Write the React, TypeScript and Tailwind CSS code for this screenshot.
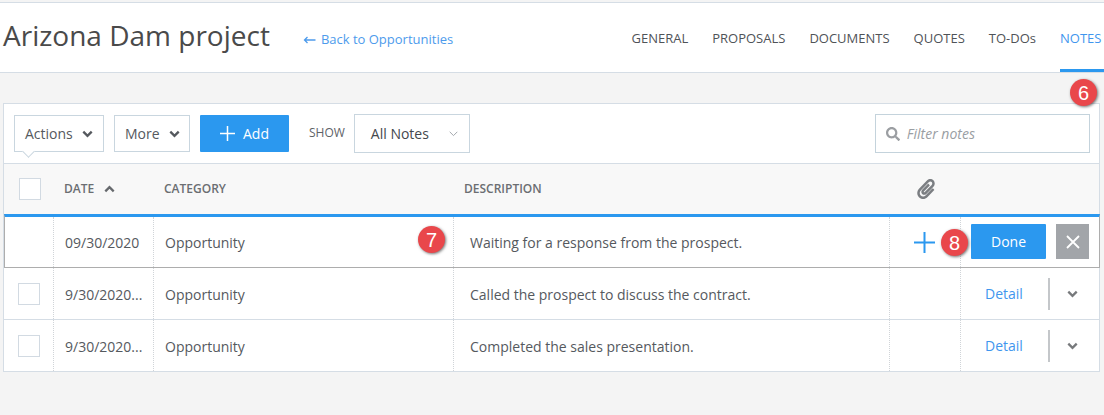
import { FaPaperclip, FaSearch } from "react-icons/fa";
import type { ReactNode } from "react";

const TABS = ["GENERAL", "PROPOSALS", "DOCUMENTS", "QUOTES", "TO-DOs"];

const ROWS = [
  { date: "9/30/2020...", text: "Called the prospect to discuss the contract." },
  { date: "9/30/2020...", text: "Completed the sales presentation." },
];

function Chevron({ up = false, className = "" }: { up?: boolean; className?: string }) {
  return (
    <svg width="11" height="8" viewBox="0 0 11 8" className={className}>
      <path
        d={up ? "M1.3 6.4 5.5 2.2 9.7 6.4" : "M1.3 1.6 5.5 5.8 9.7 1.6"}
        fill="none"
        stroke="currentColor"
        strokeWidth="2.3"
      />
    </svg>
  );
}

function Badge({ n, className }: { n: number; className: string }) {
  return (
    <span
      className={`absolute flex h-[27px] w-[27px] items-center justify-center rounded-full bg-[#e9474b] text-[20px] leading-none text-white shadow-[1px_1px_3px_rgba(0,0,0,0.55)] font-['Liberation_Sans',sans-serif] ${className}`}
    >
      {n}
    </span>
  );
}

function Checkbox() {
  return <span className="block h-[22px] w-[22px] border border-[#d2dae2] bg-white" />;
}

function Cells({ firstWidth = "w-[50px]", textPad = "pt-[2px]", first, date, category, desc, clip, last }: {
  firstWidth?: string;
  textPad?: string;
  first: ReactNode;
  date: string;
  category: string;
  desc: string;
  clip?: ReactNode;
  last: ReactNode;
}) {
  const cell = "flex h-full items-center border-r border-dotted border-[#d0d4d8]";
  return (
    <>
      <div className={`${cell} ${firstWidth} justify-center pl-[1px]`}>{first}</div>
      <div className={`${cell} ${textPad} w-[100px] pl-[11px]`}>{date}</div>
      <div className={`${cell} ${textPad} w-[300px] pl-[11px]`}>{category}</div>
      <div className={`${cell} ${textPad} w-[436px] pl-[16px]`}>{desc}</div>
      <div className={`${cell} w-[71px] justify-center`}>{clip}</div>
      <div className="flex h-full flex-1 items-center">{last}</div>
    </>
  );
}

function RowActions() {
  return (
    <>
      <a className="ml-[24px] w-[38px] text-[14px] text-[#3f96ee]">Detail</a>
      <span className="ml-[25px] h-[32px] w-[2px] bg-[#c4c7ca]" />
      <Chevron className="ml-[17px] mt-[1px] text-[#77797c]" />
    </>
  );
}

export default function App() {
  return (
    <div className="relative h-[415px] w-[1104px] overflow-hidden bg-[#f4f4f4] pt-[2px] font-['Open_Sans',sans-serif] text-[14px] text-[#55595e]">
      <header className="flex h-[71px] items-center border-y border-[#d5dde5] bg-white pl-[3px]">
        <h1 className="mb-[5px] text-[28px] leading-none text-[#4a4a4a]">Arizona Dam project</h1>
        <a className="ml-[33px] mt-[4px] flex items-center text-[13px] text-[#4d9bec]">
          <svg width="14" height="8" viewBox="0 0 14 8" className="mr-[4px]">
            <path d="M12.5 4H2M4.5 1 1.5 4l3 3" fill="none" stroke="currentColor" strokeWidth="1.3" />
          </svg>
          Back to Opportunities
        </a>
        <nav className="ml-auto flex h-full items-stretch gap-[24px] text-[13px] text-[#4f5358]">
          {TABS.map((t) => (
            <a key={t} className="mb-[3px] pt-[26px]">{t}</a>
          ))}
          <a className="w-[44px] border-b-[3px] border-[#2b98ef] pt-[26px] text-[#3f96ee]">NOTES</a>
        </nav>
      </header>

      <section className="ml-[3px] mt-[30px] w-[1097px] border border-[#d5dde5] bg-white">
        <div className="flex h-[60px] items-start border-b border-[#d5dde5] pl-[10px] pt-[10px]">
          <button className="relative mt-[1px] flex h-[37px] w-[90px] items-center border border-[#c9d6df] pl-[10px]">
            Actions
            <Chevron className="ml-[9px] text-[#55595e]" />
            <span className="absolute bottom-[-5px] left-[9px] h-[9px] w-[9px] rotate-45 border-b border-r border-[#c9d6df] bg-white" />
          </button>
          <button className="ml-[10px] mt-[1px] flex h-[37px] w-[76px] items-center border border-[#c9d6df] pl-[10px]">
            More
            <Chevron className="ml-[9px] text-[#55595e]" />
          </button>
          <button className="ml-[10px] mt-[1px] flex h-[37px] w-[89px] items-center justify-center gap-[8px] rounded-[1px] bg-[#2b98ef] text-white">
            <svg width="15" height="15" viewBox="0 0 15 15">
              <path d="M7.5 0v15M0 7.5h15" stroke="currentColor" strokeWidth="1.5" />
            </svg>
            Add
          </button>
          <span className="ml-[20px] mt-[10px] text-[12px] text-[#5e6267]">SHOW</span>
          <div className="ml-[9px] flex h-[39px] w-[116px] items-center justify-between border border-[#c9d6df] pl-[16px] pr-[11px] text-[#44484d]">
            All Notes
            <svg width="9" height="6" viewBox="0 0 9 6" className="text-[#a3a8ad]">
              <path d="M.7.8 4.5 4.6 8.3.8" fill="none" stroke="currentColor" strokeWidth="1" />
            </svg>
          </div>
          <div className="ml-[405px] flex h-[39px] w-[215px] items-center border border-[#c4d3dc] pl-[10px] text-[#9a9ea3]">
            <FaSearch className="h-[14px] w-[14px] text-[#9b9ea2]" />
            <span className="ml-[7px] italic">Filter notes</span>
          </div>
        </div>

        <div className="flex h-[50px] items-center bg-[#f8f8f8] text-[12px] font-semibold text-[#6b6e72]">
          <div className="flex w-[50px] justify-center pb-[1px] pl-[1px]">
            <Checkbox />
          </div>
          <div className="flex w-[100px] items-center pl-[10px]">
            DATE
            <Chevron up className="ml-[10px] text-[#66696d]" />
          </div>
          <div className="w-[300px] pl-[10px]">CATEGORY</div>
          <div className="w-[436px] pl-[10px]">DESCRIPTION</div>
          <div className="flex w-[71px] justify-center">
            <FaPaperclip className="h-[20px] w-[20px] text-[#7b7e82]" />
          </div>
        </div>

        <div className="-mr-[1px] flex h-[54px] items-center border-x border-b border-t-[3px] border-x-[#adadad] border-b-[#adadad] border-t-[#2b98ef]">
          <Cells
            firstWidth="w-[49px]"
            textPad="pt-[1px]"
            first={null}
            date="09/30/2020"
            category="Opportunity"
            desc="Waiting for a response from the prospect."
            clip={
              <svg width="21" height="21" viewBox="0 0 21 21" className="mr-[1px] mt-[1px] text-[#2b98ef]">
                <path d="M10.5 0v21M0 10.5h21" stroke="currentColor" strokeWidth="2" />
              </svg>
            }
            last={
              <>
                <button className="mb-[1px] ml-[10px] flex h-[35px] w-[75px] items-center justify-center rounded-[1px] bg-[#2b98ef] text-white">
                  Done
                </button>
                <button className="mb-[1px] ml-[10px] flex h-[35px] w-[33px] items-center justify-center bg-[#a2a5a9] text-white">
                  <svg width="14" height="14" viewBox="0 0 14 14">
                    <path d="M1 1l12 12M13 1 1 13" stroke="currentColor" strokeWidth="1.8" />
                  </svg>
                </button>
              </>
            }
          />
        </div>

        {ROWS.map((r, i) => (
          <div
            key={r.text}
            className={`flex items-center ${i === 0 ? "h-[52px] border-b border-[#d5dde5]" : "h-[51px]"}`}
          >
            <Cells
              first={<Checkbox />}
              date={r.date}
              category="Opportunity"
              desc={r.text}
              last={<RowActions />}
            />
          </div>
        ))}
      </section>

      <Badge n={6} className="left-[1070px] top-[79px]" />
      <Badge n={7} className="left-[418px] top-[226px]" />
      <Badge n={8} className="left-[941px] top-[229px]" />
    </div>
  );
}
